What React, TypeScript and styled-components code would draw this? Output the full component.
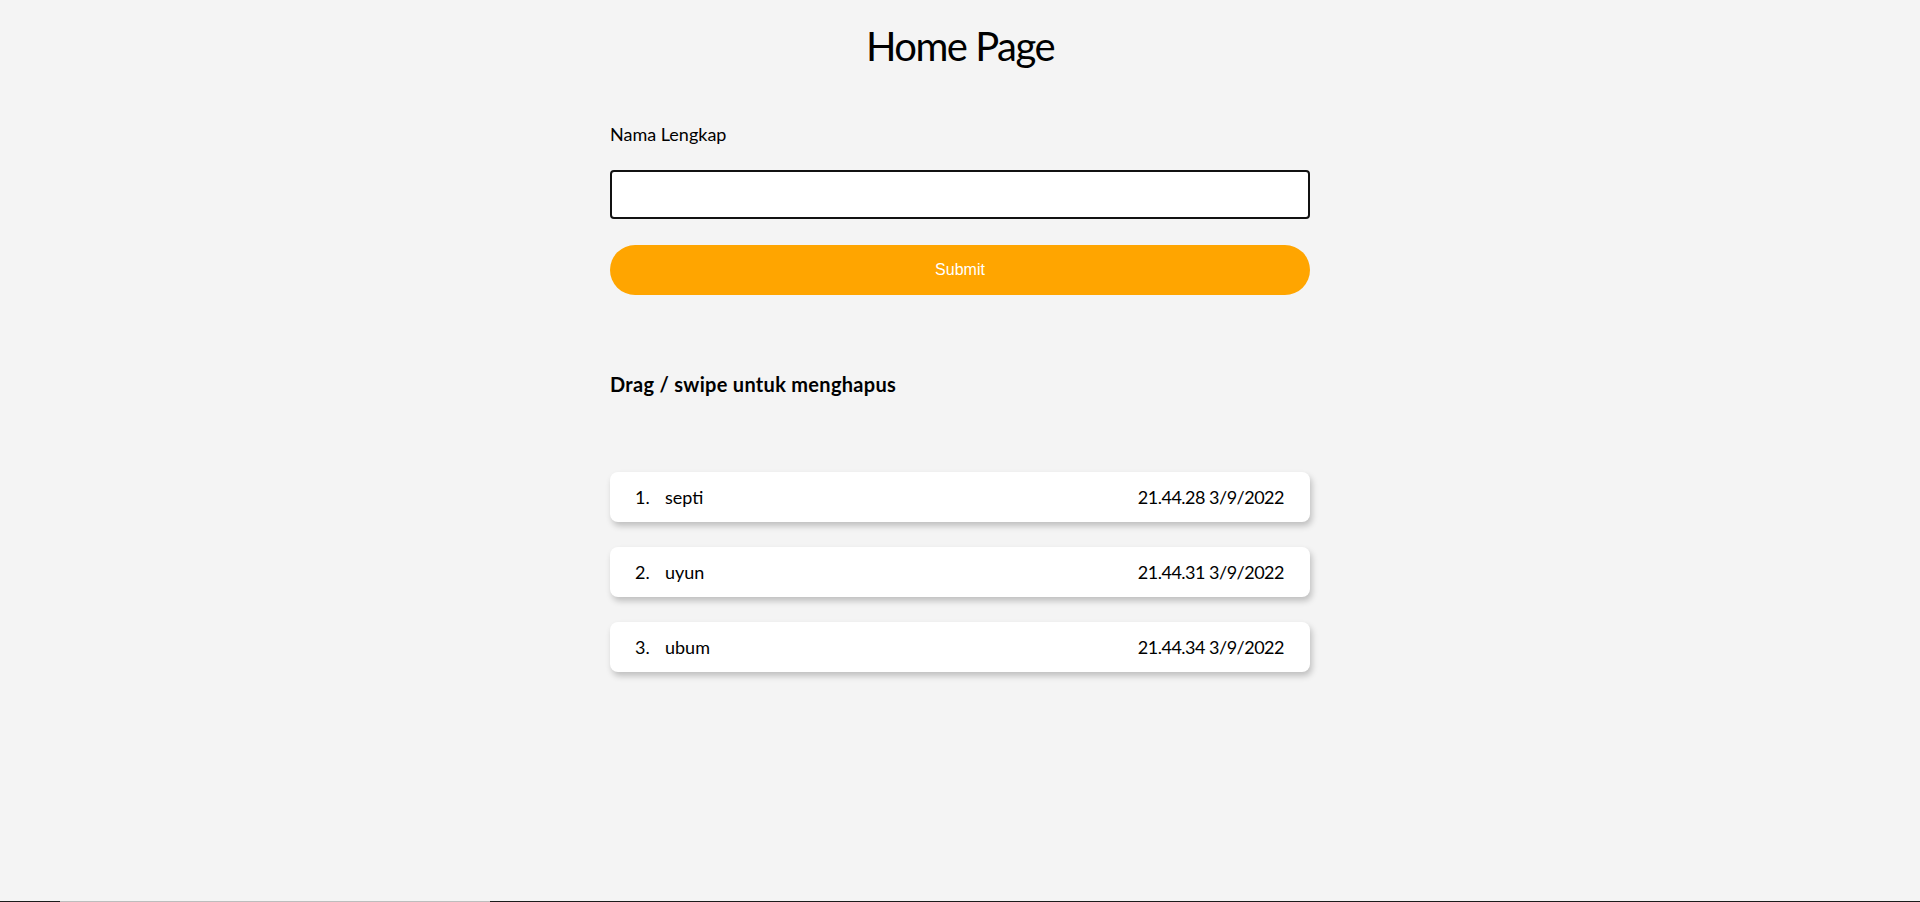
import { FC, useState } from "react";
import styled, { createGlobalStyle } from "styled-components";

const GlobalStyle = createGlobalStyle`
    html, body {
        margin: 0;
        padding: 0;
        background-color: #f4f4f4;
    }
    body {
        font-family: "Lato", "Open Sans", sans-serif;
        color: #000000;
    }
`;

const Page = styled.div`
    min-height: 100vh;
    display: flex;
    flex-direction: column;
    background-color: #f4f4f4;
`;

const Main = styled.main`
    flex: 1;
    width: 700px;
    margin: 0 auto;
    display: flex;
    flex-direction: column;
`;

const Title = styled.h1`
    margin: 0;
    padding-top: 22px;
    font-size: 40px;
    line-height: 48px;
    font-weight: 400;
    letter-spacing: -1.5px;
    text-align: center;
`;

const Form = styled.form`
    margin-top: 53px;
    display: flex;
    flex-direction: column;
`;

const Label = styled.label`
    font-size: 18px;
    line-height: 22px;
`;

const Input = styled.input`
    margin-top: 25px;
    height: 49px;
    box-sizing: border-box;
    border: 2px solid #111111;
    border-radius: 4px;
    background: #ffffff;
    padding: 0 12px;
    font-family: "Lato", sans-serif;
    font-size: 18px;
    outline: none;
`;

const SubmitButton = styled.button`
    margin-top: 26px;
    height: 50px;
    border: none;
    border-radius: 25px;
    background-color: #ffa500;
    color: #ffffff;
    font-family: "Liberation Sans", Arial, sans-serif;
    font-size: 16px;
    cursor: pointer;
`;

const Hint = styled.h3`
    margin: 77px 0 0;
    font-size: 20px;
    line-height: 24px;
    font-weight: 700;
    letter-spacing: 0.3px;
`;

const List = styled.ol`
    list-style: none;
    margin: 76px 0 0;
    padding: 0;
    display: flex;
    flex-direction: column;
    gap: 25px;
`;

const Item = styled.li`
    height: 50px;
    display: flex;
    align-items: center;
    padding: 0 26px 0 25px;
    background: #ffffff;
    border-radius: 8px;
    box-shadow: 2px 4px 6px rgba(0, 0, 0, 0.22);
    font-size: 18px;
`;

const Number = styled.span`
    width: 30px;
`;

const Name = styled.span`
    flex: 1;
`;

const Time = styled.span`
    white-space: nowrap;
    letter-spacing: -0.5px;
`;

const BottomLine = styled.div`
    height: 1px;
    background: linear-gradient(
        to right,
        #1c1c1c 0,
        #1c1c1c 60px,
        #bdbdbd 60px,
        #bdbdbd 490px,
        #1c1c1c 490px
    );
`;

type Entry = { name: string; time: string };

const entries: Entry[] = [
    { name: "septi", time: "21.44.28 3/9/2022" },
    { name: "uyun", time: "21.44.31 3/9/2022" },
    { name: "ubum", time: "21.44.34 3/9/2022" },
];

const App: FC = () => {
    const [name, setName] = useState("");

    return (
        <Page>
            <GlobalStyle />
            <Main>
                <Title>Home Page</Title>
                <Form onSubmit={(e) => e.preventDefault()}>
                    <Label htmlFor="nama">Nama Lengkap</Label>
                    <Input id="nama" autoFocus value={name} onChange={(e) => setName(e.target.value)} />
                    <SubmitButton type="submit">Submit</SubmitButton>
                </Form>
                <Hint>Drag / swipe untuk menghapus</Hint>
                <List>
                    {entries.map((entry, i) => (
                        <Item key={entry.time}>
                            <Number>{i + 1}.</Number>
                            <Name>{entry.name}</Name>
                            <Time>{entry.time}</Time>
                        </Item>
                    ))}
                </List>
            </Main>
            <BottomLine />
        </Page>
    );
};

export default App;
